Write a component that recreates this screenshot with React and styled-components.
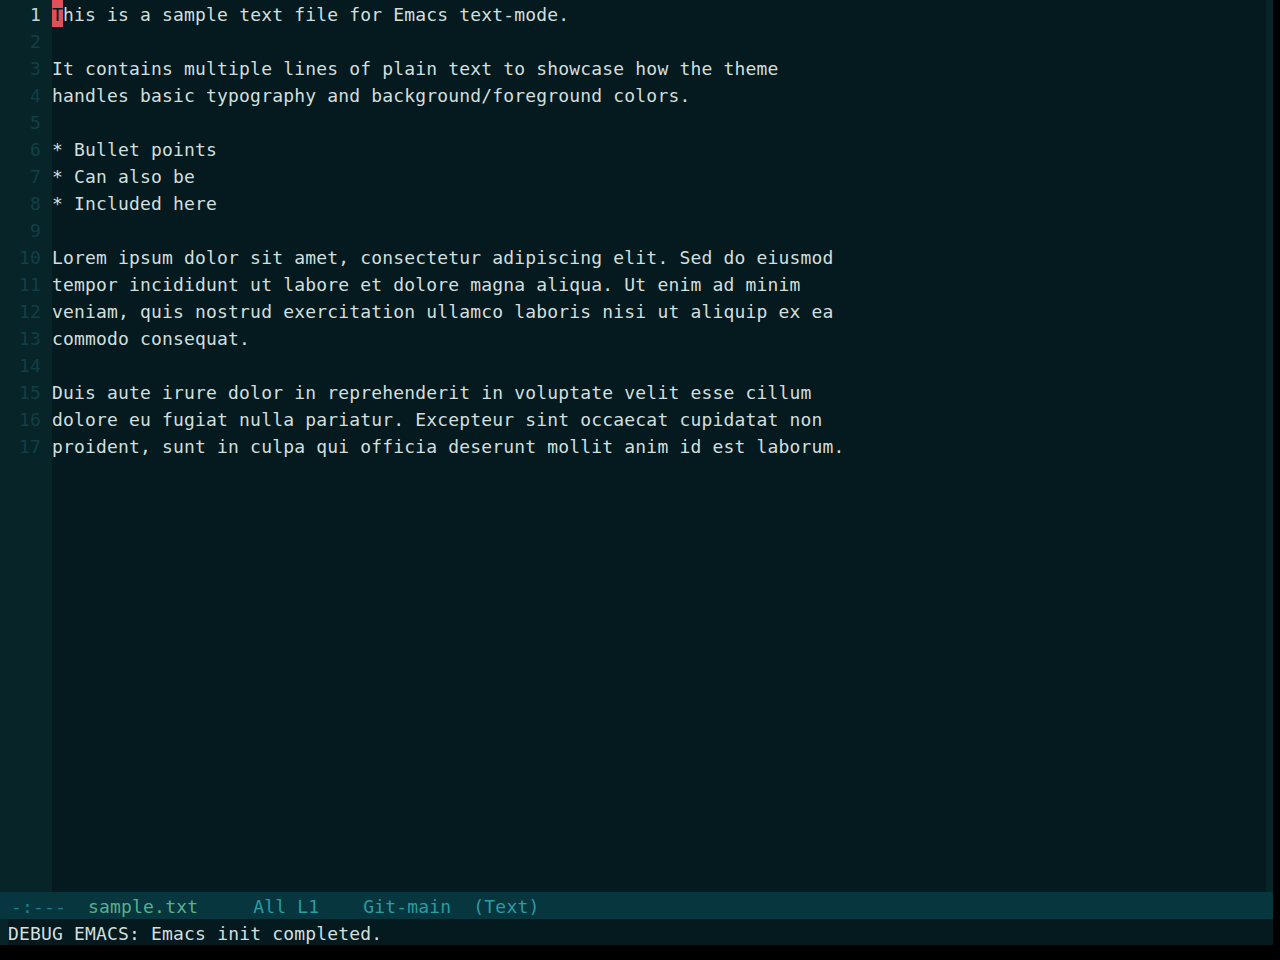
import React from 'react';
import styled, { createGlobalStyle } from 'styled-components';

const LINE_HEIGHT = 27;
const CHAR_FONT = `'DejaVu Sans Mono', 'Liberation Mono', monospace`;

const GlobalStyle = createGlobalStyle`
  html, body {
    margin: 0;
    padding: 0;
    background: #000;
  }
`;

const Frame = styled.div`
  width: 1273px;
  height: 945px;
  display: flex;
  flex-direction: column;
  font-family: ${CHAR_FONT};
  font-size: 18px;
  letter-spacing: 0.17px;
  line-height: 29px;
  overflow: hidden;
`;

const EditorWindow = styled.div`
  flex: 1;
  display: flex;
  background: #041a1e;
  min-height: 0;
`;

const Gutter = styled.div`
  width: 52px;
  flex: none;
  background: #072429;
  box-sizing: border-box;
  padding-right: 11px;
  text-align: right;
`;

const LineNumber = styled.div`
  height: ${LINE_HEIGHT}px;
  color: ${(p) => (p.current ? '#c5d5d4' : '#123f46')};
`;

const TextArea = styled.div`
  flex: 1;
  color: #d2dfde;
  white-space: pre;
`;

const TextLine = styled.div`
  height: ${LINE_HEIGHT}px;
`;

const Cursor = styled.span`
  display: inline-block;
  height: ${LINE_HEIGHT}px;
  vertical-align: top;
  background: #e0505c;
  color: #041a1e;
`;

const RightFringe = styled.div`
  width: 7px;
  flex: none;
  background: #072429;
`;

const ModeLine = styled.div`
  height: 27px;
  flex: none;
  background: #07363f;
  white-space: pre;
`;

const Segment = styled.span`
  color: ${(p) => p.color};
`;

const Minibuffer = styled.div`
  height: 26px;
  flex: none;
  display: flex;
  background: #041a1e;
  color: #d2dfde;
  white-space: pre;
`;

const MiniFringe = styled.div`
  width: 8px;
  flex: none;
  background: #072429;
`;

const MiniText = styled.div`
  flex: 1;
`;

const lines = [
  'This is a sample text file for Emacs text-mode.',
  '',
  'It contains multiple lines of plain text to showcase how the theme',
  'handles basic typography and background/foreground colors.',
  '',
  '* Bullet points',
  '* Can also be',
  '* Included here',
  '',
  'Lorem ipsum dolor sit amet, consectetur adipiscing elit. Sed do eiusmod',
  'tempor incididunt ut labore et dolore magna aliqua. Ut enim ad minim',
  'veniam, quis nostrud exercitation ullamco laboris nisi ut aliquip ex ea',
  'commodo consequat.',
  '',
  'Duis aute irure dolor in reprehenderit in voluptate velit esse cillum',
  'dolore eu fugiat nulla pariatur. Excepteur sint occaecat cupidatat non',
  'proident, sunt in culpa qui officia deserunt mollit anim id est laborum.',
];

const App = () => {
  return (
    <>
      <GlobalStyle />
      <Frame>
        <EditorWindow>
          <Gutter>
            {lines.map((_, i) => (
              <LineNumber key={i} current={i === 0}>
                {i + 1}
              </LineNumber>
            ))}
          </Gutter>
          <TextArea>
            {lines.map((line, i) => (
              <TextLine key={i}>
                {i === 0 ? (
                  <>
                    <Cursor>{line[0]}</Cursor>
                    {line.slice(1)}
                  </>
                ) : (
                  line
                )}
              </TextLine>
            ))}
          </TextArea>
          <RightFringe />
        </EditorWindow>
        <ModeLine>
          {' '}
          <Segment color="#1f7f88">-:---</Segment>
          {'  '}
          <Segment color="#5bae8c">sample.txt</Segment>
          {'     '}
          <Segment color="#2b9ba2">All L1</Segment>
          {'    '}
          <Segment color="#2b9ba2">Git-main</Segment>
          {'  '}
          <Segment color="#2b9ba2">(Text)</Segment>
        </ModeLine>
        <Minibuffer>
          <MiniFringe />
          <MiniText>DEBUG EMACS: Emacs init completed.</MiniText>
        </Minibuffer>
      </Frame>
    </>
  );
};

export default App;
